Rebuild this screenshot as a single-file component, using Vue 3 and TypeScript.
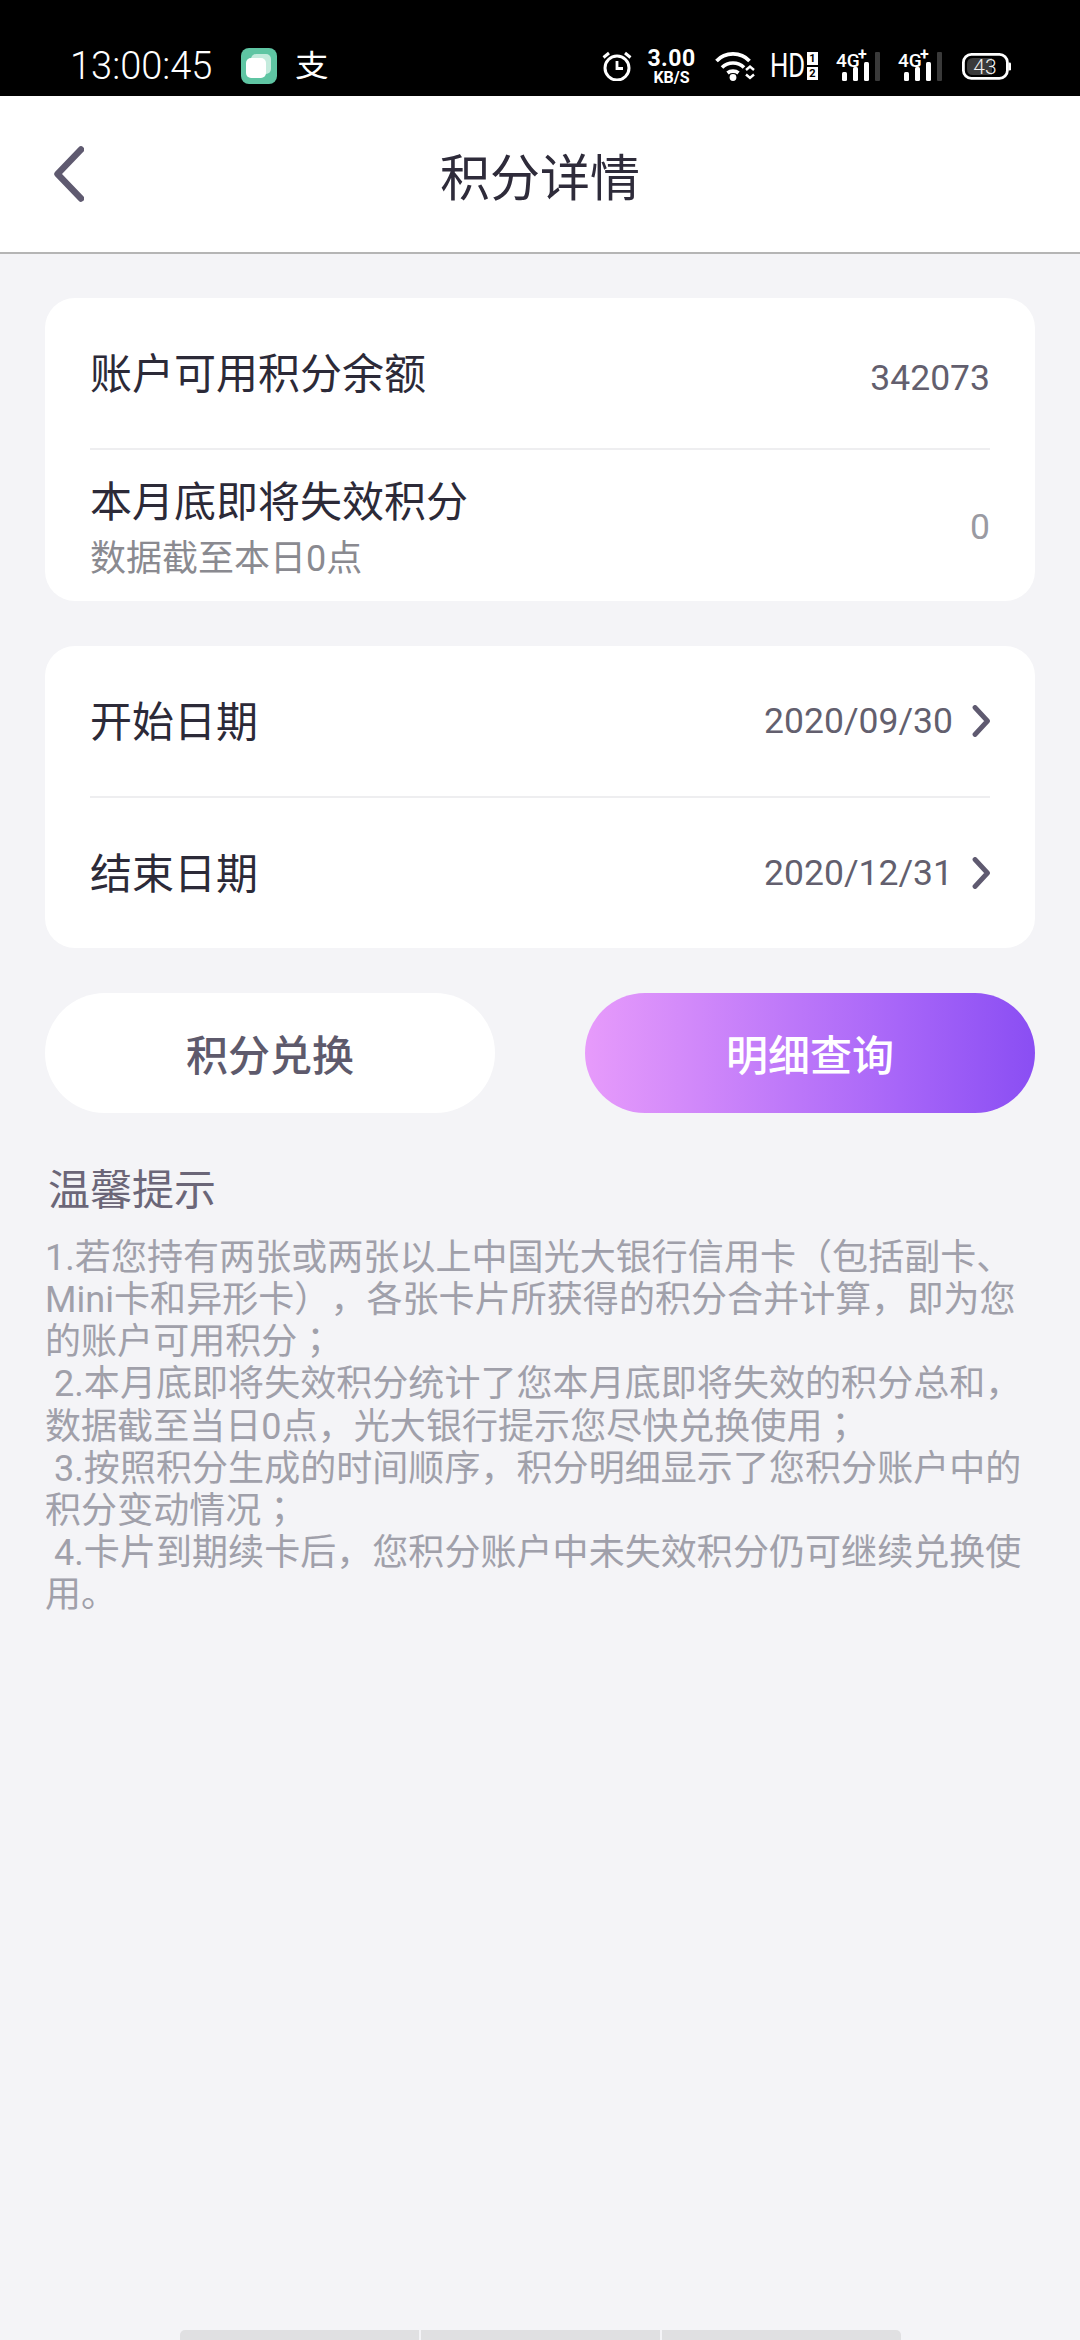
<template>
  <div class="page">
    <!-- 状态栏 -->
    <div class="status-bar">
      <span class="clock">13:00:45</span>
      <svg class="app-icon" width="36" height="36" viewBox="0 0 36 36">
        <rect width="36" height="36" rx="8" fill="#5fc5a3" />
        <rect x="10" y="6" width="20" height="20" rx="5" fill="#c4ebdd" />
        <rect x="5" y="10" width="20" height="20" rx="5" fill="#fff" />
      </svg>
      <span class="alipay">支</span>

      <div class="status-right">
        <svg class="alarm" width="30" height="30" viewBox="0 0 30 30" fill="none" stroke="#fff">
          <circle cx="15" cy="17" r="12" stroke-width="3" />
          <path d="M15 10V17.5H21" stroke-width="2.8" />
          <path d="M1.5 6.5L7 2M28.5 6.5L23 2" stroke-width="3" />
        </svg>
        <div class="speed">
          <span class="speed-num">3.00</span>
          <span class="speed-unit">KB/S</span>
        </div>
        <svg class="wifi" width="40" height="30" viewBox="0 0 40 30" fill="none" stroke="#fff" stroke-width="3.6">
          <path d="M1.5 10C10 0.5 26 0.5 34.5 10" />
          <path d="M7 16.5C13 10.5 23 10.5 29 16.5" />
          <path d="M12.5 22C15.5 19.5 20.5 19.5 23.5 22" />
          <circle cx="18" cy="26.5" r="3.4" fill="#fff" stroke="none" />
          <path d="M31 19L35 15.5L39 19M31 23.5L35 27L39 23.5" stroke-width="2.4" />
        </svg>
        <div class="hd">
          <span class="hd-text">HD</span>
          <div class="sim-boxes">
            <span class="sim-box">1</span>
            <span class="sim-box">2</span>
          </div>
        </div>
        <svg v-for="n in 2" :key="n" class="signal" width="44" height="32" viewBox="0 0 44 32">
          <text x="0" y="17" font-size="19" font-weight="500" fill="#fff" class="sig-text">4G</text>
          <text x="22" y="10" font-size="16" font-weight="700" fill="#fff" class="sig-text">+</text>
          <rect x="6" y="22" width="5" height="9" rx="1.5" fill="#fff" />
          <rect x="17" y="17" width="5" height="14" rx="1.5" fill="#fff" />
          <rect x="28" y="12" width="5" height="19" rx="1.5" fill="#fff" />
          <rect x="39" y="2" width="5" height="29" rx="1" fill="#3a3a3a" />
        </svg>
        <svg class="battery" width="49" height="27" viewBox="0 0 49 27">
          <rect x="1.4" y="1.4" width="44" height="24" rx="8" fill="none" stroke="#fff" stroke-width="2.8" />
          <path d="M11 5H30V22H11Q5 22 5 16V11Q5 5 11 5Z" fill="#3a3a3a" />
          <rect x="46.5" y="9.5" width="2.5" height="8" rx="1.2" fill="#fff" />
          <text x="23" y="21" font-size="21" font-weight="300" text-anchor="middle" fill="#eee" class="sig-text">43</text>
        </svg>
      </div>
    </div>

    <!-- 标题栏 -->
    <header class="nav">
      <svg class="back" width="30" height="56" viewBox="0 0 30 56" fill="none">
        <path d="M27 3.5L3.5 28L27 52.5" stroke="#5f5a70" stroke-width="6.5" stroke-linecap="round" stroke-linejoin="round" />
      </svg>
      <h1 class="nav-title">积分详情</h1>
    </header>

    <main class="content">
      <section class="card card-balance">
        <div class="row">
          <span class="label">账户可用积分余额</span>
          <span class="value value-total">342073</span>
        </div>
        <div class="row">
          <div class="label-group">
            <span class="label">本月底即将失效积分</span>
            <span class="sub">数据截至本日0点</span>
          </div>
          <span class="value value-muted">0</span>
        </div>
      </section>

      <section class="card card-dates">
        <div v-for="d in dates" :key="d.label" class="row">
          <span class="label">{{ d.label }}</span>
          <div class="date">
            <span class="value">{{ d.value }}</span>
            <svg width="18" height="32" viewBox="0 0 18 32" fill="none">
              <path d="M3 2.5L15.5 16L3 29.5" stroke="#5f5a70" stroke-width="4.8" stroke-linecap="round" stroke-linejoin="round" />
            </svg>
          </div>
        </div>
      </section>

      <div class="actions">
        <button class="btn btn-plain">积分兑换</button>
        <button class="btn btn-primary">明细查询</button>
      </div>

      <h2 class="tips-title">温馨提示</h2>
      <div class="tips">
        <div v-for="line in tips" :key="line" class="tips-line">
          <template v-if="line.endsWith('；')">{{ line.slice(0, -1) }}<span class="semi">；</span></template>
          <template v-else>{{ line }}</template>
        </div>
      </div>
    </main>

    <div class="gesture">
      <span class="gesture-part"></span>
      <span class="gesture-part"></span>
      <span class="gesture-part"></span>
    </div>
  </div>
</template>

<script setup lang="ts">
const dates: { label: string; value: string }[] = [
  { label: '开始日期', value: '2020/09/30' },
  { label: '结束日期', value: '2020/12/31' },
]

const tips: string[] = [
  '1.若您持有两张或两张以上中国光大银行信用卡（包括副卡、',
  'Mini卡和异形卡），各张卡片所获得的积分合并计算，即为您',
  '的账户可用积分；',
  ' 2.本月底即将失效积分统计了您本月底即将失效的积分总和，',
  '数据截至当日0点，光大银行提示您尽快兑换使用；',
  ' 3.按照积分生成的时间顺序，积分明细显示了您积分账户中的',
  '积分变动情况；',
  ' 4.卡片到期续卡后，您积分账户中未失效积分仍可继续兑换使',
  '用。',
]
</script>

<style>
html,
body {
  margin: 0;
  background: #f4f4f7;
}
</style>

<style scoped>
.page {
  min-height: 2340px;
  display: flex;
  flex-direction: column;
  background: #f4f4f7;
  font-family: Roboto, "Noto Sans CJK SC", sans-serif;
}

.status-bar {
  height: 60px;
  padding: 36px 69px 0 70px;
  display: flex;
  align-items: center;
  background: #000;
  color: #fff;
}

.clock {
  font-size: 38px;
  line-height: 60px;
  font-weight: 300;
  width: 146px;
  white-space: nowrap;
}

.app-icon {
  margin-left: 25px;
}

.alipay {
  margin-left: 20px;
  width: 33px;
  font-size: 30px;
  line-height: 60px;
  transform: scaleX(1.12);
}

.status-right {
  margin-left: auto;
  display: flex;
  align-items: center;
}

.speed {
  margin-left: 16px;
  width: 47px;
  display: flex;
  flex-direction: column;
  align-items: center;
  font-weight: 700;
}

.speed-num {
  font-size: 23px;
  line-height: 22px;
  letter-spacing: 0.5px;
}

.speed-unit {
  font-size: 16px;
  line-height: 15px;
}

.wifi {
  margin-left: 20px;
}

.hd {
  margin-left: 15px;
  display: flex;
  align-items: center;
  gap: 2px;
}

.hd-text {
  width: 35px;
  font-size: 33px;
  line-height: 40px;
  white-space: nowrap;
  transform: scaleX(0.78);
  transform-origin: left center;
}

.sig-text {
  font-family: Roboto, sans-serif;
}

.sim-boxes {
  display: flex;
  flex-direction: column;
  gap: 2px;
}

.sim-box {
  width: 11px;
  height: 13px;
  background: #fff;
  color: #000;
  font-size: 11px;
  line-height: 13px;
  font-weight: 700;
  text-align: center;
}

.signal {
  margin-left: 18px;
  overflow: visible;
}

.battery {
  margin-left: 20px;
}

.nav {
  position: relative;
  height: 156px;
  display: flex;
  align-items: center;
  justify-content: center;
  background: #fff;
  border-bottom: 2px solid #b5b5b5;
}

.back {
  position: absolute;
  left: 54px;
  top: 50px;
}

.nav-title {
  margin: 0;
  font-size: 50px;
  font-weight: 400;
  color: #2e2b3a;
}

.content {
  padding: 44px 45px 0;
  display: flex;
  flex-direction: column;
}

.card {
  margin-bottom: 45px;
  padding: 0 45px;
  border-radius: 30px;
  background: #fff;
}

.card-balance {
  padding-bottom: 1px;
}

.row {
  box-sizing: border-box;
  height: 150px;
  display: flex;
  align-items: center;
  justify-content: space-between;
}

.row + .row {
  height: 152px;
  border-top: 2px solid #eeeef0;
}

.card-balance .row {
  padding-top: 4px;
}

.card-dates .label {
  padding-top: 4px;
}

.label {
  font-size: 42px;
  line-height: 56px;
  color: #2c2a38;
}

.label-group {
  padding-top: 8px;
  display: flex;
  flex-direction: column;
}

.sub {
  font-size: 36px;
  line-height: 56px;
  color: #8a8a90;
}

.value {
  font-size: 35.5px;
  color: #635f6e;
}

.value-total {
  padding-top: 5px;
}

.value-muted {
  color: #9a9aa2;
}

.date {
  display: flex;
  align-items: center;
  gap: 19px;
}

.actions {
  display: flex;
  justify-content: space-between;
}

.btn {
  width: 450px;
  height: 120px;
  padding: 0 0 2px;
  border: none;
  border-radius: 60px;
  font-family: inherit;
  font-size: 42px;
  font-weight: 500;
}

.btn-plain {
  background: #fff;
  color: #5e5a6c;
}

.btn-primary {
  background: linear-gradient(90deg, #e79bfb 0%, #a765f8 70%, #8a4ef3 100%);
  color: #fff;
}

.tips-title {
  margin: 47px 0 0 3px;
  font-size: 42px;
  line-height: 62px;
  font-weight: 400;
  color: #6b6678;
}

.tips {
  margin-top: 15px;
  font-size: 36px;
  line-height: 42.15px;
  letter-spacing: 0.06px;
  color: #a0a0aa;
  text-spacing-trim: space-all;
}

.tips-line {
  white-space: pre;
}

.semi {
  font-family: Roboto, "Noto Sans CJK TC", sans-serif;
}

.gesture {
  margin-top: auto;
  align-self: center;
  display: flex;
  gap: 2px;
}

.gesture-part {
  width: 239px;
  height: 10px;
  background: #e0e0e2;
}

.gesture-part:first-child {
  border-radius: 5px 0 0 0;
}

.gesture-part:last-child {
  border-radius: 0 5px 0 0;
}
</style>
